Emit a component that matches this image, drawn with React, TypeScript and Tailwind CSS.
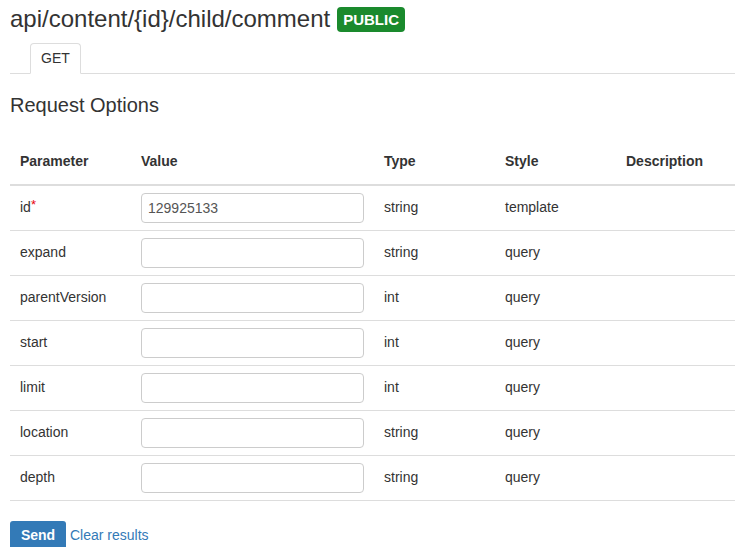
const rows = [
  { name: 'id', req: true, value: '129925133', type: 'string', style: 'template' },
  { name: 'expand', value: '', type: 'string', style: 'query' },
  { name: 'parentVersion', value: '', type: 'int', style: 'query' },
  { name: 'start', value: '', type: 'int', style: 'query' },
  { name: 'limit', value: '', type: 'int', style: 'query' },
  { name: 'location', value: '', type: 'string', style: 'query' },
  { name: 'depth', value: '', type: 'string', style: 'query' },
];

export default function App() {
  return (
    <div className="pl-[10px] text-[14px] text-[#333]" style={{ fontFamily: 'Arial, "Liberation Sans", sans-serif' }}>
      <div className="flex items-center h-[36px] pt-[1px]">
        <span className="text-[24px] leading-none">api/content/{'{id}'}/child/comment</span>
        <span className="ml-[7px] mt-[2px] rounded-[4px] bg-[#1a8a2d] px-[6px] h-[25px] leading-[25px] text-[15px] font-bold text-white">PUBLIC</span>
      </div>
      <div className="mt-[7px] flex h-[31px] border-b border-[#ddd] pl-[20px]">
        <div className="h-[31px] w-[51px] rounded-t-[4px] border border-b-white border-[#ddd] bg-white text-center leading-[28px] text-[14px]">GET</div>
      </div>
      <div className="mt-[19px] text-[20px] leading-[24px]">Request Options</div>
      <table className="mt-[21px] w-[725px] border-collapse text-left">
        <thead>
          <tr className="h-[47px] border-b-2 border-[#ddd] font-bold">
            <th className="w-[131px] pl-[10px]">Parameter</th>
            <th className="w-[243px]">Value</th>
            <th className="w-[121px]">Type</th>
            <th className="w-[121px]">Style</th>
            <th>Description</th>
          </tr>
        </thead>
        <tbody>
          {rows.map((r) => (
            <tr key={r.name} className="h-[45px] border-b border-[#ddd]">
              <td className="pl-[10px]">
                {r.name}
                {r.req && <span className="text-red-600 align-top text-[13px] relative -top-[2px]">*</span>}
              </td>
              <td>
                <input
                  readOnly
                  value={r.value}
                  className="h-[30px] w-[223px] rounded-[4px] border border-[#ccc] px-[6px] text-[14px] text-[#555] outline-none"
                />
              </td>
              <td>{r.type}</td>
              <td>{r.style}</td>
              <td></td>
            </tr>
          ))}
        </tbody>
      </table>
      <div className="mt-[20px] flex items-center">
        <button className="h-[30px] w-[56px] rounded-[3px] bg-[#337ab7] text-[14px] font-bold text-white">Send</button>
        <span className="ml-[4px] text-[#337ab7]">Clear results</span>
      </div>
    </div>
  );
}
